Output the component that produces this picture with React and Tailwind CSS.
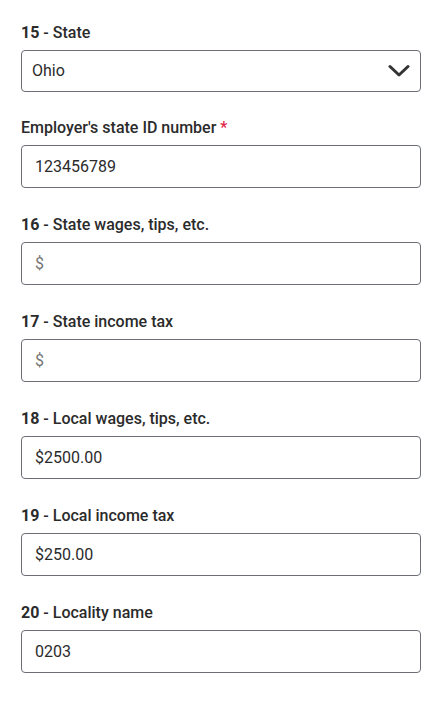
import React from "react";

const fields = [
  { num: "16", label: "State wages, tips, etc.", value: "", placeholder: "$" },
  { num: "17", label: "State income tax", value: "", placeholder: "$" },
  { num: "18", label: "Local wages, tips, etc.", value: "$2500.00" },
  { num: "19", label: "Local income tax", value: "$250.00" },
  { num: "20", label: "Locality name", value: "0203" },
];

function Label({ children }) {
  return (
    <div className="text-[16px] leading-6 font-medium text-[#2b2b2b] mb-[5px]">{children}</div>
  );
}

function TextBox({ value, placeholder }) {
  return (
    <div className="h-[43px] w-[400px] border border-[#6b6e76] rounded-[4px] flex items-center px-[13px] text-[16px] bg-white">
      {value ? (
        <span className="text-[#2b2b2b]">{value}</span>
      ) : (
        <span className="text-[#757575]">{placeholder}</span>
      )}
    </div>
  );
}

export default function App() {
  return (
    <div
      className="w-[440px] min-h-[701px] bg-white pt-[21px] pl-[21px]"
      style={{ fontFamily: "Roboto, 'Liberation Sans', sans-serif" }}
    >
      <div className="mb-[24px]">
        <Label>
          <span className="font-bold">15</span> - State
        </Label>
        <div className="h-[42px] w-[400px] border border-[#6b6e76] rounded-[4px] flex items-center justify-between pl-[10px] pr-[10px] text-[16px] text-[#2b2b2b]">
          <span>Ohio</span>
          <svg width="22" height="14" viewBox="0 0 22 14" fill="none">
            <path d="M2 2.5 L11 11 L20 2.5" stroke="#333" strokeWidth="3" strokeLinecap="round" strokeLinejoin="round" />
          </svg>
        </div>
      </div>

      <div className="mb-[25px]">
        <Label>
          Employer's state ID number <span className="text-[#e0244a]">*</span>
        </Label>
        <TextBox value="123456789" />
      </div>

      {fields.map((f) => (
        <div key={f.num} className="mb-[25px]">
          <Label>
            <span className="font-bold">{f.num}</span> - {f.label}
          </Label>
          <TextBox value={f.value} placeholder={f.placeholder} />
        </div>
      ))}
    </div>
  );
}
